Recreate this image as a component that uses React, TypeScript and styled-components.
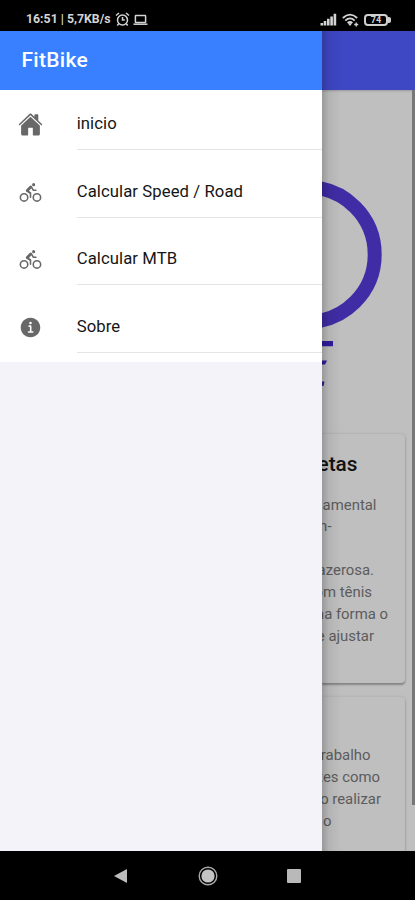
import React from 'react';
import styled, { createGlobalStyle } from 'styled-components';
import { IoHome, IoBicycle, IoInformationCircle } from 'react-icons/io5';

const GlobalStyle = createGlobalStyle`
  * { box-sizing: border-box; }
  body { margin: 0; background: #000; font-family: Roboto, "Liberation Sans", sans-serif; }
`;

const Screen = styled.div`
  width: 415px;
  height: 900px;
  display: flex;
  flex-direction: column;
  overflow: hidden;
  background: #000;
`;

const StatusBar = styled.header`
  flex: 0 0 31px;
  display: flex;
  justify-content: space-between;
  padding: 12px 24px 0 26px;
  color: #d4d4d4;
`;

const StatusGroup = styled.div<{ $gap: number }>`
  display: flex;
  align-items: center;
  gap: ${(p) => p.$gap}px;
  height: 15px;
`;

const StatusText = styled.span`
  font-size: 12.3px;
  font-weight: 700;
  line-height: 15px;
  width: 86px;
  white-space: nowrap;
`;

const Main = styled.main`
  flex: 0 0 820px;
  height: 820px;
  min-height: 0;
  display: flex;
  overflow: hidden;
`;

const Drawer = styled.nav`
  flex: 0 0 322px;
  display: flex;
  flex-direction: column;
  background: #f3f3f9;
`;

const DrawerHeader = styled.div`
  height: 59px;
  padding-left: 21.5px;
  background: #3880ff;
  color: #fff;
  font-size: 21px;
  font-weight: 500;
  line-height: 59px;
  letter-spacing: 0.3px;
`;

const MenuList = styled.ul`
  margin: 0;
  padding: 0 0 9px;
  list-style: none;
  background: #fff;
`;

const MenuItem = styled.li<{ $first?: boolean }>`
  display: flex;
  height: ${(p) => (p.$first ? 60 : 67.7)}px;
  padding-left: 17.5px;
`;

const IconCell = styled.span`
  flex: 0 0 59.2px;
  display: flex;
  align-items: flex-end;
  padding-bottom: 13px;
  color: #686868;
`;

const MenuLabel = styled.span`
  flex: 1;
  display: flex;
  align-items: flex-end;
  padding-bottom: 15px;
  border-bottom: 1px solid #e4e4e4;
  color: #151515;
  font-size: 16.7px;
  line-height: 20px;
  letter-spacing: 0.08px;
`;

const Page = styled.section`
  position: relative;
  flex: 1;
  min-width: 0;
  height: 820px;
  display: flex;
  flex-direction: column;
  overflow: hidden;
  background: #bfbfbf;
`;

const EdgeShadow = styled.div`
  position: absolute;
  inset: 0 auto 0 0;
  width: 20px;
  background: linear-gradient(to right, rgba(0, 0, 0, 0.2), rgba(0, 0, 0, 0.06) 35%, transparent);
`;

const ScrollThumb = styled.div`
  position: absolute;
  top: 59px;
  right: 0;
  width: 3.5px;
  height: 715px;
  background: #777;
`;

const PageHeader = styled.div`
  flex: 0 0 59px;
  background: #3e47c4;
  box-shadow: 0 1px 2px rgba(0, 0, 0, 0.2);
`;

const Logo = styled.svg`
  flex: 0 0 344px;
  width: 93px;
  display: block;
`;

const Card = styled.article<{ $height: number; $top: number }>`
  flex: 0 0 ${(p) => p.$height}px;
  width: 83px;
  margin-bottom: 14px;
  padding-top: ${(p) => p.$top}px;
  border-radius: 0 4px 4px 0;
  box-shadow: 0 2px 2px rgba(0, 0, 0, 0.28), 0 0 3px rgba(0, 0, 0, 0.14);
  background: #bfbfbf;
`;

const CardTitle = styled.h2`
  display: flex;
  justify-content: flex-end;
  width: 35.5px;
  margin: 0 0 17.5px;
  color: #111;
  font-size: 20.8px;
  font-weight: 500;
  line-height: 24px;
`;

const TextLine = styled.div<{ $end: number }>`
  display: flex;
  justify-content: flex-end;
  width: ${(p) => p.$end}px;
  height: 21.9px;
  color: #5c5c5c;
  font-size: 14.9px;
  line-height: 22px;
  white-space: nowrap;
`;

const NavBar = styled.footer`
  flex: 1;
  display: flex;
  align-items: center;
  justify-content: space-between;
  padding: 0 114px;
`;

const lines: [string, number][] = [
  ['fundamental', 54.5],
  ['bem-', 9.5],
  ['', 0],
  ['prazerosa.', 52],
  ['com tênis', 50],
  ['uma forma o', 66],
  ['e ajustar', 52],
];

const moreLines: [string, number][] = [
  ['trabalho', 48.5],
  ['antes como', 58],
  ['o realizar', 59],
  ['o', 9.5],
];

const AlarmIcon = () => (
  <svg width="15" height="15" viewBox="0 0 15 15" fill="none" stroke="currentColor" strokeWidth="1.5">
    <circle cx="7.5" cy="8" r="5" />
    <path d="M1 3.5 4 1M14 3.5 11 1M3.7 11.7 2.3 13.5M11.3 11.7l1.4 1.8M7.5 5v3h2.3" />
  </svg>
);

const LaptopIcon = () => (
  <svg width="15" height="12" viewBox="0 0 15 12" fill="none" stroke="currentColor" strokeWidth="1.5">
    <rect x="2.4" y="1.5" width="10.2" height="7" rx="0.6" />
    <path d="M.5 10.2h14" />
  </svg>
);

const SignalIcon = () => (
  <svg width="17" height="13" viewBox="0 0 17 13" fill="currentColor">
    <path d="M.5 10h2.6v2.5H.5zM3.7 8h2.6v4.5H3.7zM7 5.8h2.6v6.7H7zM10.3 3.4h2.6v9.1h-2.6zM13.6.8h2.6v11.7h-2.6z" />
  </svg>
);

const WifiIcon = () => (
  <svg width="17" height="14" viewBox="0 0 17 14" fill="none" stroke="currentColor" strokeWidth="1.8">
    <path d="M.8 5q7.2-6.8 14.4 0M3.3 7.6q4.7-4.4 9.4 0M5.6 10q2.4-2 4.8 0" />
    <path d="m8 13-2-2.4q2-1.4 4 0z" fill="currentColor" stroke="none" />
    <path d="M12.2 11.5h4M14.2 9.5v4" strokeWidth="1.4" />
  </svg>
);

const Battery = styled.span`
  position: relative;
  width: 24px;
  height: 12px;
  border: 2px solid #cfcfcf;
  border-radius: 4px;
  margin-right: 3px;
  font-size: 9px;
  font-weight: 700;
  line-height: 9px;
  text-align: center;
  &::after {
    content: '';
    position: absolute;
    left: 22px;
    top: 1px;
    width: 2.5px;
    height: 6px;
    border-radius: 0 2px 2px 0;
    background: #cfcfcf;
  }
`;

export default function App() {
  return (
    <Screen>
      <GlobalStyle />
      <StatusBar>
        <StatusGroup $gap={3}>
          <StatusText>16:51 | 5,7KB/s</StatusText>
          <AlarmIcon />
          <LaptopIcon />
        </StatusGroup>
        <StatusGroup $gap={5}>
          <SignalIcon />
          <WifiIcon />
          <Battery>74</Battery>
        </StatusGroup>
      </StatusBar>
      <Main>
        <Drawer>
          <DrawerHeader>FitBike</DrawerHeader>
          <MenuList>
            <MenuItem $first>
              <IconCell><IoHome size={25} /></IconCell>
              <MenuLabel>inicio</MenuLabel>
            </MenuItem>
            <MenuItem>
              <IconCell><IoBicycle size={25} /></IconCell>
              <MenuLabel>Calcular Speed / Road</MenuLabel>
            </MenuItem>
            <MenuItem>
              <IconCell><IoBicycle size={25} /></IconCell>
              <MenuLabel>Calcular MTB</MenuLabel>
            </MenuItem>
            <MenuItem>
              <IconCell><IoInformationCircle size={25} /></IconCell>
              <MenuLabel>Sobre</MenuLabel>
            </MenuItem>
          </MenuList>
        </Drawer>
        <Page>
          <PageHeader />
          <Logo viewBox="0 0 93 344">
            <circle cx="-14.5" cy="164.5" r="67.2" fill="none" stroke="#402ca5" strokeWidth="14" />
            <path d="M0 251h11v5.3H0zM0 270.5h5l-2 4H0zM0 291.5h2.5l-1 4.5H0z" fill="#301c9c" />
          </Logo>
          <Card $height={249} $top={18}>
            <CardTitle>bicicletas</CardTitle>
            {lines.map(([text, end], i) => (
              <TextLine key={i} $end={end}>{text}</TextLine>
            ))}
          </Card>
          <Card $height={190} $top={47}>
            {moreLines.map(([text, end], i) => (
              <TextLine key={i} $end={end}>{text}</TextLine>
            ))}
          </Card>
          <EdgeShadow />
          <ScrollThumb />
        </Page>
      </Main>
      <NavBar>
        <svg width="14" height="16" viewBox="0 0 14 16"><path d="M0 8 13 1v14z" fill="#bdbdbd" /></svg>
        <svg width="20" height="20" viewBox="0 0 20 20">
          <circle cx="10" cy="10" r="8.8" fill="none" stroke="#aaa" strokeWidth="1.4" />
          <circle cx="10" cy="10" r="6.6" fill="#c4c4c4" />
        </svg>
        <svg width="14" height="14" viewBox="0 0 14 14"><rect width="14" height="14" rx="1" fill="#b9b9b9" /></svg>
      </NavBar>
    </Screen>
  );
}
